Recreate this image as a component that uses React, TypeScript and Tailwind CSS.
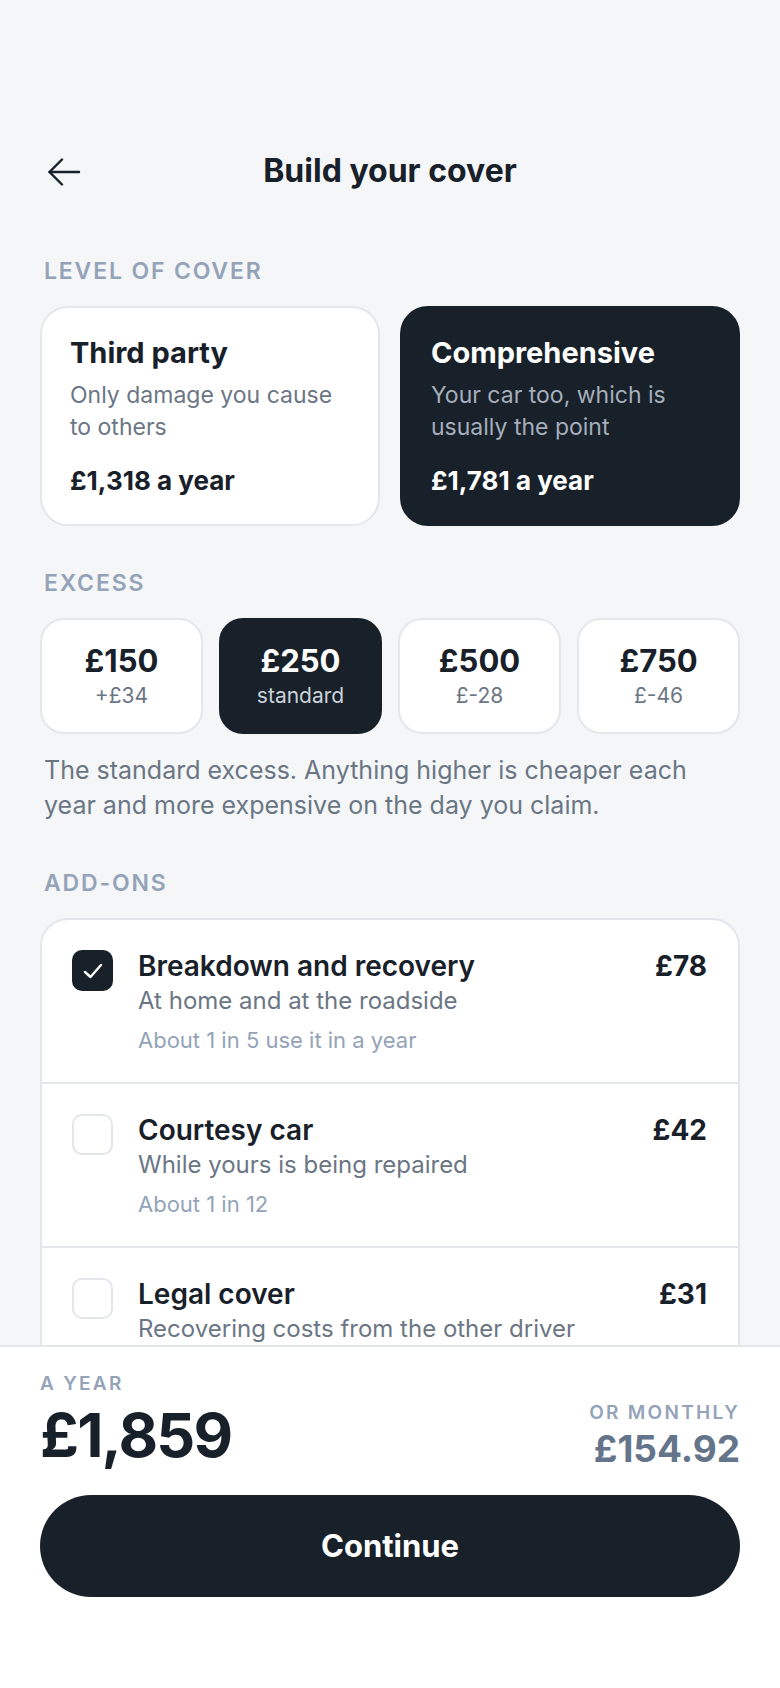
import { useState } from 'react'

const covers = [
  { id: 'tp', name: 'Third party', desc: 'Only damage you cause to others', price: '£1,318 a year' },
  { id: 'comp', name: 'Comprehensive', desc: 'Your car too, which is usually the point', price: '£1,781 a year' },
]

const excesses = [
  { amount: '£150', note: '+£34' },
  { amount: '£250', note: 'standard' },
  { amount: '£500', note: '£-28' },
  { amount: '£750', note: '£-46' },
]

const addOns = [
  { id: 'breakdown', name: 'Breakdown and recovery', desc: 'At home and at the roadside', note: 'About 1 in 5 use it in a year', price: '£78' },
  { id: 'courtesy', name: 'Courtesy car', desc: 'While yours is being repaired', note: 'About 1 in 12', price: '£42' },
  { id: 'legal', name: 'Legal cover', desc: 'Recovering costs from the other driver', note: 'About 1 in 40', price: '£31' },
]

function SectionLabel({ children }: { children: React.ReactNode }) {
  return (
    <div className="pl-1 text-[23px] leading-[23px] font-semibold tracking-[0.08em] text-[#94a3b8]">
      {children}
    </div>
  )
}

function BackArrow() {
  return (
    <svg width="34" height="28" viewBox="0 0 34 28" fill="none" stroke="#18202a" strokeWidth="2.4" strokeLinecap="round" strokeLinejoin="round">
      <path d="M15 1.5 L2.5 14 L15 26.5" />
      <path d="M2.5 14 H32" />
    </svg>
  )
}

function Check() {
  return (
    <svg width="20" height="16" viewBox="0 0 20 16" fill="none" stroke="white" strokeWidth="2.4" strokeLinecap="round" strokeLinejoin="round">
      <path d="M2 9 L7.5 14 L18 2" />
    </svg>
  )
}

export default function App() {
  const [cover, setCover] = useState('comp')
  const [excess, setExcess] = useState('£250')
  const [selected, setSelected] = useState<string[]>(['breakdown'])

  const toggle = (id: string) =>
    setSelected((s) => (s.includes(id) ? s.filter((x) => x !== id) : [...s, id]))

  return (
    <div className="flex h-[1688px] w-[780px] flex-col bg-[#f4f6f8] font-[family-name:Inter,sans-serif] text-[#18202a]">
      <div className="flex-1 overflow-hidden px-10 pt-[142px]">
        <div className="grid h-[60px] grid-cols-[80px_1fr_80px] items-center">
          <button className="flex items-center pl-[7px]">
            <BackArrow />
          </button>
          <h1 className="pb-[2px] text-center text-[32px] leading-[58px] font-bold">Build your cover</h1>
          <div />
        </div>

        <div className="mt-[58px]">
          <SectionLabel>LEVEL OF COVER</SectionLabel>
        </div>
        <div className="mt-[23px] grid grid-cols-2 gap-5">
          {covers.map((c) => {
            const on = cover === c.id
            return (
              <button
                key={c.id}
                onClick={() => setCover(c.id)}
                className={
                  on
                    ? 'rounded-[28px] border-2 border-[#18202a] bg-[#18202a] px-[29px] pt-[28px] pb-[27px] text-left'
                    : 'rounded-[28px] border-2 border-[#e3e7eb] bg-white px-[28px] pt-[28px] pb-[27px] text-left'
                }
              >
                <div className={on ? 'text-[29px] leading-[34px] font-bold text-white' : 'text-[29px] leading-[34px] font-bold text-[#18202a]'}>
                  {c.name}
                </div>
                <div className={on ? 'mt-[9px] text-[23px] leading-[32px] text-[#a5aeba]' : 'mt-[9px] text-[23px] leading-[32px] text-[#6b7684]'}>
                  {c.desc}
                </div>
                <div className={on ? 'mt-[22px] text-[26px] leading-[32px] font-bold text-white' : 'mt-[22px] text-[26px] leading-[32px] font-bold text-[#18202a]'}>
                  {c.price}
                </div>
              </button>
            )
          })}
        </div>

        <div className="mt-[46px]">
          <SectionLabel>EXCESS</SectionLabel>
        </div>
        <div className="mt-[23px] grid grid-cols-4 gap-4">
          {excesses.map((e) => {
            const on = excess === e.amount
            return (
              <button
                key={e.amount}
                onClick={() => setExcess(e.amount)}
                className={
                  on
                    ? 'flex h-[116px] flex-col items-center justify-center rounded-[24px] border-2 border-[#18202a] bg-[#18202a]'
                    : 'flex h-[116px] flex-col items-center justify-center rounded-[24px] border-2 border-[#e3e7eb] bg-white'
                }
              >
                <span className={on ? 'text-[31px] leading-[36px] font-bold text-white' : 'text-[31px] leading-[36px] font-bold text-[#18202a]'}>
                  {e.amount}
                </span>
                <span className={on ? 'mt-1 text-[21px] leading-[26px] text-[#cbd2da]' : 'mt-1 text-[21px] leading-[26px] text-[#6b7684]'}>
                  {e.note}
                </span>
              </button>
            )
          })}
        </div>
        <p className="mt-[19px] pr-6 pl-1 text-[25px] leading-[35px] text-[#6b7684]">
          The standard excess. Anything higher is cheaper each year and more expensive on the day you claim.
        </p>

        <div className="mt-[49px]">
          <SectionLabel>ADD-ONS</SectionLabel>
        </div>
        <div className="mt-[23px] rounded-[28px] border-2 border-[#e3e7eb] bg-white">
          {addOns.map((a) => {
            const on = selected.includes(a.id)
            return (
              <div
                key={a.id}
                onClick={() => toggle(a.id)}
                className="flex items-start gap-[25px] border-b-2 border-[#e3e7eb] pt-[29px] pr-[31px] pb-[28px] pl-[30px] last:border-b-0"
              >
                <div
                  className={
                    on
                      ? 'mt-px flex h-[41px] w-[41px] shrink-0 items-center justify-center rounded-[10px] bg-[#18202a]'
                      : 'mt-px h-[41px] w-[41px] shrink-0 rounded-[10px] border-2 border-[#e3e7eb] bg-white'
                  }
                >
                  {on && <Check />}
                </div>
                <div className="flex-1">
                  <div className="text-[28px] leading-[34px] font-semibold">{a.name}</div>
                  <div className="mt-[2px] text-[24px] leading-[32px] text-[#6b7684]">{a.desc}</div>
                  <div className="mt-[9px] text-[22px] leading-[28px] text-[#94a3b8]">{a.note}</div>
                </div>
                <div className="text-[28px] leading-[34px] font-bold">{a.price}</div>
              </div>
            )
          })}
        </div>
      </div>

      <div className="h-[343px] shrink-0 border-t-2 border-[#e3e7eb] bg-white px-10 pt-[28px]">
        <div className="flex items-start justify-between">
          <div>
            <div className="text-[19px] leading-[18px] font-semibold tracking-[0.12em] text-[#94a3b8]">A YEAR</div>
            <div className="mt-[11px] text-[61px] leading-[62px] font-bold tracking-[-0.03em]">£1,859</div>
          </div>
          <div className="mt-[29px] text-right">
            <div className="text-[19px] leading-[18px] font-semibold tracking-[0.12em] text-[#94a3b8]">OR MONTHLY</div>
            <div className="mt-[8px] text-[37px] leading-[37px] font-bold text-[#64748b]">£154.92</div>
          </div>
        </div>
        <button className="mt-[28px] flex h-[102px] w-full items-center justify-center rounded-full bg-[#18202a] text-[31px] font-bold text-white">
          Continue
        </button>
      </div>
    </div>
  )
}
